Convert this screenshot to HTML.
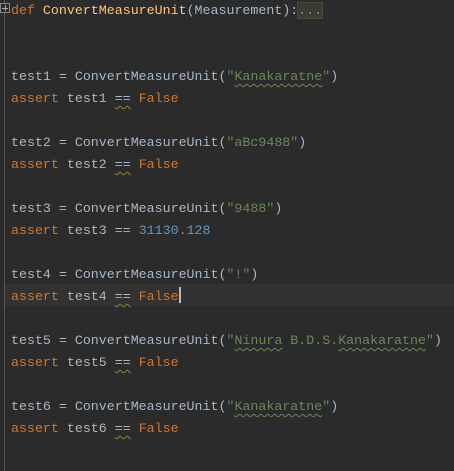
<!DOCTYPE html>
<html><head><style>
html,body{margin:0;padding:0;background:#2b2b2b;width:454px;height:471px;overflow:hidden}
.g{position:absolute;left:4px;top:0;width:1px;height:471px;background:#555}
.cur{position:absolute;left:5px;top:284px;width:449px;height:22px;background:#323232}
pre{position:absolute;left:11px;top:0px;margin:0;font-family:"Liberation Mono",monospace;font-size:13.3px;line-height:22px;color:#a9b7c6}
.k{color:#cc7832}.f{color:#ffc66d}.s{color:#6a8759}.n{color:#6897bb}
.w{text-decoration:underline wavy #6a8759;text-decoration-thickness:1px;text-underline-offset:3px}
.wg{text-decoration:underline wavy #8a8a40;text-decoration-thickness:1px;text-underline-offset:3px}
.fold{background:#3b3b33;color:#888;outline:1px solid #4a4a40}
.box{position:absolute;left:0;top:3px;width:8px;height:8px;border:1px solid #888;background:#2b2b2b}
.box:before{content:"";position:absolute;left:1px;top:3.5px;width:6px;height:1px;background:#aaa}
.box:after{content:"";position:absolute;left:3.5px;top:1px;width:1px;height:6px;background:#aaa}
.caret{display:inline-block;width:2px;height:16px;background:#bbb;vertical-align:-3px}
</style></head><body>
<div class="g"></div><div class="cur"></div><div class="box"></div>
<pre><span class="k">def </span><span class="f">ConvertMeasureUnit</span>(Measurement):<span class="fold">...</span>


test1 = ConvertMeasureUnit(<span class="s">"<span class="w">Kanakaratne</span>"</span>)
<span class="k">assert </span>test1 <span class="wg">==</span> <span class="k">False</span>

test2 = ConvertMeasureUnit(<span class="s">"aBc9488"</span>)
<span class="k">assert </span>test2 <span class="wg">==</span> <span class="k">False</span>

test3 = ConvertMeasureUnit(<span class="s">"9488"</span>)
<span class="k">assert </span>test3 == <span class="n">31130.128</span>

test4 = ConvertMeasureUnit(<span class="s">"!"</span>)
<span class="k">assert </span>test4 <span class="wg">==</span> <span class="k">False</span><span class="caret"></span>

test5 = ConvertMeasureUnit(<span class="s">"<span class="w">Ninura</span> B.D.S.<span class="w">Kanakaratne</span>"</span>)
<span class="k">assert </span>test5 <span class="wg">==</span> <span class="k">False</span>

test6 = ConvertMeasureUnit(<span class="s">"<span class="w">Kanakaratne</span>"</span>)
<span class="k">assert </span>test6 <span class="wg">==</span> <span class="k">False</span></pre>
</body></html>
